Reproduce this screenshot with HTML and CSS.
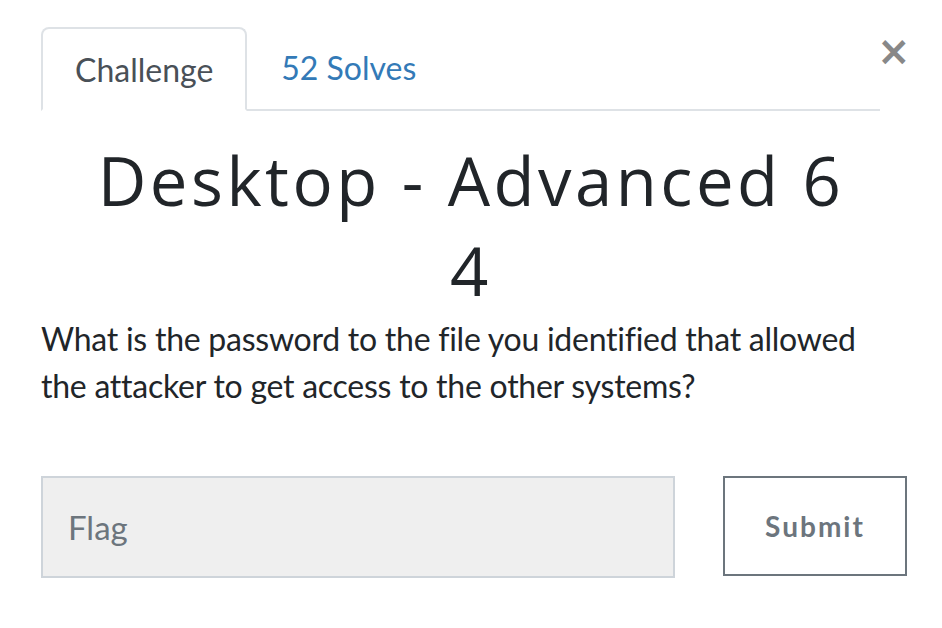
FILE: index.html
```html
<!DOCTYPE html>
<html>
<head>
<meta charset="utf-8">
<link rel="stylesheet" href="styles.css">
</head>
<body>
<div class="modal">
  <div class="header">
    <ul class="tabs">
      <li class="tab active">Challenge</li>
      <li class="tab link">52 Solves</li>
    </ul>
    <button class="close" aria-label="Close">×</button>
  </div>
  <div class="body">
    <h3 class="title">Desktop - Advanced 6 4</h3>
    <p class="desc">What is the password to the file you identified that allowed the attacker to get access to the other systems?</p>
    <form class="flag-form">
      <input class="flag-input" type="text" placeholder="Flag">
      <button type="button" class="submit">Submit</button>
    </form>
  </div>
</div>
</body>
</html>
```
FILE: styles.css
```css
* { box-sizing: border-box; }
html, body { margin: 0; padding: 0; background: #fff; }
body { font-family: Lato, "Liberation Sans", sans-serif; color: #212529; }
.modal { width: 942px; height: 628px; padding: 27px 34px 0 41px; }
.header { display: flex; align-items: flex-start; }
.tabs { list-style: none; margin: 0; padding: 0; display: flex; width: 839px; border-bottom: 2px solid #dee2e6; }
.tab { font-size: 32px; line-height: 38px; padding: 22px 34px 20px 34px; }
.tab.active { color: #495057; border: 2px solid #dee2e6; border-bottom-color: #fff; border-radius: 8px 8px 0 0; margin-bottom: -2px; padding-left: 32px; padding-right: 32px; }
.tab.link { color: #337ab7; }
.close { margin-left: -3px; margin-top: 4px; background: none; border: 0; padding: 0; font-family: "DejaVu Sans", sans-serif; font-size: 40px; line-height: 40px; font-weight: bold; color: #888; width: 24px; }
.body { width: 860px; }
.title { font-family: "Open Sans", sans-serif; font-weight: 400; font-size: 67px; line-height: 90px; letter-spacing: 3.5px; text-align: center; margin: 24px 0 0 0; color: #212529; padding: 0 50px; }
.desc { font-size: 32px; line-height: 47px; letter-spacing: -0.25px; margin: 0; max-width: 830px; }
.flag-form { display: flex; margin-top: 67px; width: 866px; }
.flag-input { width: 634px; height: 102px; background: #efefef; border: 2px solid #ced4da; font-family: Lato, sans-serif; font-size: 33px; padding: 0 25px; color: #495057; }
.flag-input::placeholder { color: #6c757d; }
.submit { margin-left: 48px; width: 184px; height: 100px; background: #fff; border: 2px solid #6c757d; color: #6c757d; font-family: Lato, sans-serif; font-weight: 700; font-size: 28px; letter-spacing: 2px; }
```
